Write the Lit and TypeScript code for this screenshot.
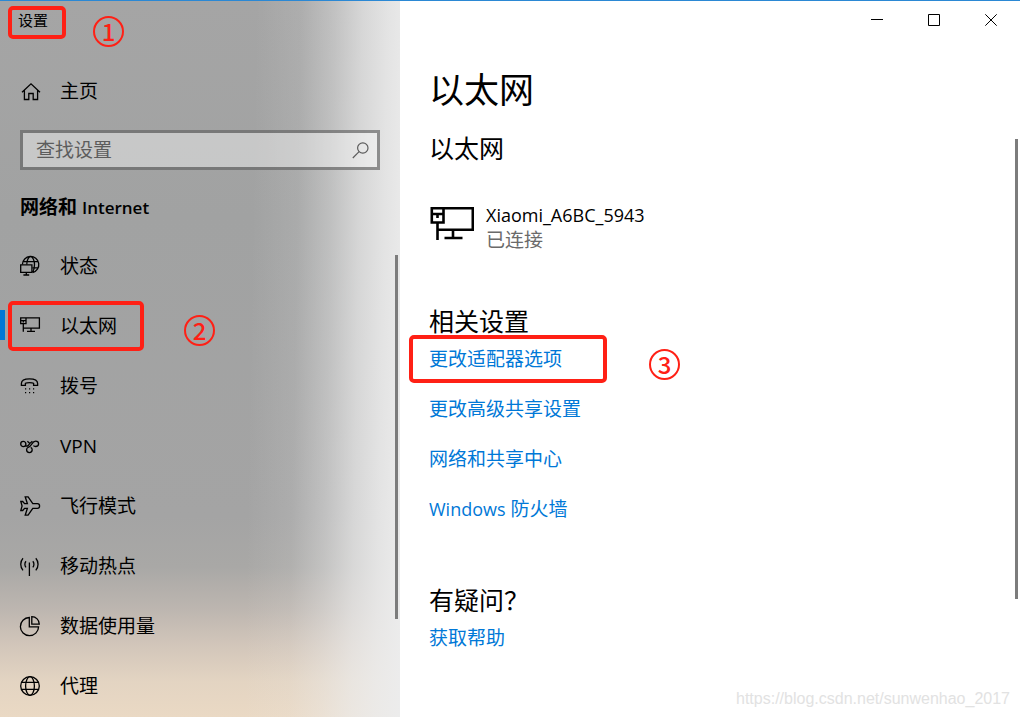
import { LitElement, html, svg, css } from "lit";
import { customElement, property, state } from "lit/decorators.js";

const icons: Record<string, unknown> = {
  status: svg`<path d="M2.4 8.4A8.2 8.2 0 1 1 12.6 16.6M6.8 8.5C6.8 4 8.6.7 10.6.7s3.9 3.4 3.9 8c0 3-.8 5.6-2 7.6M3.5 5.6h14.2M12.3 11.8h5.6"/><path d="M.7 8.8h11.2v7.6H.7zM6.3 16.4v2.6M3.4 19h5.8"/>`,
  ethernet: svg`<path d="M6 1.8h13.4v10.4H3.3M.7 1.8H6v5.9H.7zM.7 4.6H6M3.3 4.6v2M3.3 7.7v8M11 12.2v3M7 15.3h8"/>`,
  dialup: svg`<path d="M1.4 9.4V7.6C1.4 4.4 5 2.9 9.5 2.9s8.1 1.5 8.1 4.7v1.8h-4V7.3c-1.8-1-6.4-1-8.2 0v2.1z"/><path d="M5 12.9h1.2M9 12.9h1.2M13 12.9h1.2M5 16.7h1.2M9 16.7h1.2M13 16.7h1.2"/>`,
  vpn: svg`<circle cx="3.3" cy="8" r="2.6"/><path d="M5.4 9.6c2.2 1.6 3.2-.6 4.7-2.6M7.4 5.3l2.4 2.2 2.6-2.2M13.4 9.6c.6.6 1.4.9 2.2.9 1.7 0 3-1.2 3-2.7s-1.3-2.6-3-2.6c-3.6 0-4.2 5.4-7.4 6.1-1 .6-1.6 1.5-1.6 2.5 0 1.6 1.3 2.8 2.8 2.8s2.8-1.2 2.8-2.8c0-1.1-.6-2-1.5-2.4"/>`,
  airplane: svg`<path d="M5.2.8h2.9l4.7 6.9h4.6c1.4 0 2.2 1.1 2.2 2.3s-.8 2.3-2.2 2.3h-4.6l-4.7 6.9H5.2l2.2-6.9H4.6l-1.9 2.2H.8L2.1 10 .8 5.5h1.9l1.9 2.2h2.8z"/>`,
  hotspot: svg`<path d="M9.4 6.4V20M6 5.2c-1.5 1.6-1.5 4.6 0 6.2M12.8 5.2c1.5 1.6 1.5 4.6 0 6.2M3 2.2c-3 3.3-3 8.9 0 12.2M15.8 2.2c3 3.3 3 8.9 0 12.2"/>`,
  usage: svg`<path d="M9.3 1.5A9.1 9.1 0 1 0 18.6 10.8H9.3z"/><path d="M11.8.7c4.2 0 7.5 3.3 7.5 7.5h-7.5z"/>`,
  proxy: svg`<circle cx="10" cy="10" r="9.3"/><ellipse cx="10" cy="10" rx="4.4" ry="9.3"/><path d="M1.5 6.4h17M1.5 13.4h17"/>`,
  home: svg`<path d="M2 11.2l9-8.4 9 8.4M4.4 9.3v9.2h4.4v-6h4.4v6h4.4V9.3"/>`,
};

interface NavEntry {
  icon: string;
  label: string;
  step?: number;
}

const navEntries: NavEntry[] = [
  { icon: "status", label: "状态" },
  { icon: "ethernet", label: "以太网", step: 2 },
  { icon: "dialup", label: "拨号" },
  { icon: "vpn", label: "VPN" },
  { icon: "airplane", label: "飞行模式" },
  { icon: "hotspot", label: "移动热点" },
  { icon: "usage", label: "数据使用量" },
  { icon: "proxy", label: "代理" },
];

/** Red outline and numbered circle that mark one step of the guide. */
@customElement("step-mark")
class StepMark extends LitElement {
  @property({ type: Number }) step = 1;

  static styles = css`
    :host {
      position: absolute;
      inset: var(--mark-inset, 0);
      box-sizing: border-box;
      border: 4px solid #ff2015;
      border-radius: 5px;
      pointer-events: none;
    }
    .number {
      position: absolute;
      left: calc(100% + var(--mark-gap, 46px));
      top: var(--mark-top, 10px);
      box-sizing: border-box;
      width: 31px;
      height: 31px;
      border: 2px solid #ff2015;
      border-radius: 50%;
      color: #ff2015;
      font: 500 24px/26px "Noto Sans CJK SC", sans-serif;
      text-align: center;
    }
  `;

  render() {
    return html`<span class="number">${this.step}</span>`;
  }
}

@customElement("settings-sidebar")
class SettingsSidebar extends LitElement {
  @state() private current = "以太网";

  static styles = css`
    :host {
      position: relative;
      display: block;
      box-sizing: border-box;
      background:
        linear-gradient(91deg, rgba(236, 236, 236, 0) 62%, rgba(236, 236, 236, 0.12) 73%, rgba(236, 236, 236, 0.4) 81%, rgba(236, 236, 236, 0.7) 88%, rgba(236, 236, 236, 0.88) 94%, #ececec 100%),
        linear-gradient(#a5a5a5 0%, #a1a2a2 30%, #a4a4a4 72%, #a9a8a6 79%, #bdb6b0 85%, #d2c6ba 90%, #e3d4c2 95%, #ead9c4 100%);
    }
    .titlebar {
      display: flex;
      padding: 5px 8px 0;
    }
    .title {
      position: relative;
      margin: 0;
      padding: 4px 18px 8px 10px;
      font-size: 15px;
      line-height: 21px;
      font-weight: 400;
      --mark-gap: 31px;
      --mark-top: 6px;
    }
    a {
      display: flex;
      align-items: center;
      gap: 20px;
      color: inherit;
      text-decoration: none;
    }
    .home {
      height: 40px;
      margin-top: 32px;
      padding-left: 20px;
    }
    .icon {
      flex: none;
      width: 20px;
      height: 20px;
      fill: none;
      stroke: #000;
      stroke-width: 1.3;
      overflow: visible;
    }
    .search {
      display: flex;
      align-items: center;
      box-sizing: border-box;
      height: 40px;
      margin: 19px 20px 0;
      padding: 0 8px 0 13px;
      border: 3px solid rgba(0, 0, 0, 0.4);
      background: rgba(255, 255, 255, 0.4);
    }
    .field {
      flex: 1;
      min-width: 0;
      padding: 0;
      border: 0;
      outline: 0;
      background: none;
      color: #000;
      font: inherit;
    }
    .field::placeholder {
      color: #5c5c5c;
      opacity: 1;
    }
    .go {
      display: flex;
      padding: 0;
      border: 0;
      background: none;
    }
    .lens {
      width: 17px;
      height: 17px;
      fill: none;
      stroke: #5c5c5c;
      stroke-width: 1.2;
    }
    .group {
      margin: 24px 20px 15px;
      font-size: 19px;
      line-height: 27px;
      font-weight: 700;
    }
    .latin {
      font-size: 17px;
      font-weight: 600;
    }
    ul {
      margin: 0;
      padding: 0;
      list-style: none;
    }
    .item {
      position: relative;
      height: 60px;
      padding-left: 20px;
    }
    .item.current::before {
      content: "";
      position: absolute;
      left: 0;
      top: 14px;
      width: 5px;
      height: 30px;
      background: #0078d7;
    }
    .item step-mark {
      --mark-inset: 5px auto 5px 8px;
      --mark-gap: 44px;
      width: 136px;
    }
    .thumb {
      position: absolute;
      right: 2px;
      top: 254px;
      width: 3px;
      height: 364px;
      background: #7c7c7c;
    }
  `;

  render() {
    return html`
      <div class="titlebar">
        <h1 class="title">设置<step-mark .step=${1}></step-mark></h1>
      </div>
      <a class="home" href="#home">
        <svg class="icon" viewBox="0 0 20 20" aria-hidden="true">${icons.home}</svg>主页
      </a>
      <form class="search" role="search" @submit=${(e: Event) => e.preventDefault()}>
        <input class="field" type="text" placeholder="查找设置" aria-label="查找设置" />
        <button class="go" aria-label="查找">
          <svg class="lens" viewBox="0 0 17 17" aria-hidden="true">
            <circle cx="10.8" cy="6" r="5.2" /><path d="M7.1 9.7L.8 16" />
          </svg>
        </button>
      </form>
      <h2 class="group">网络和 <span class="latin">Internet</span></h2>
      <nav>
        <ul>
          ${navEntries.map(
            (entry) => html`<li>
              <a
                class="item ${entry.label === this.current ? "current" : ""}"
                href="#${entry.icon}"
                @click=${() => (this.current = entry.label)}
              >
                <svg class="icon" viewBox="0 0 20 20" aria-hidden="true">${icons[entry.icon]}</svg>
                <span>${entry.label}</span>
                ${entry.step ? html`<step-mark .step=${entry.step}></step-mark>` : ""}
              </a>
            </li>`
          )}
        </ul>
      </nav>
      <div class="thumb"></div>
    `;
  }
}

@customElement("ethernet-page")
class EthernetPage extends LitElement {
  static styles = css`
    :host {
      position: relative;
      display: block;
      background: #fff;
    }
    .controls {
      display: flex;
      justify-content: flex-end;
      padding-right: 1px;
    }
    .control {
      display: grid;
      place-items: center;
      width: 57px;
      height: 38px;
      padding: 0;
      border: 0;
      background: none;
    }
    .glyph {
      width: 12px;
      height: 12px;
      fill: none;
      stroke: #000;
      stroke-width: 1;
    }
    .content {
      padding: 25px 29px 0;
    }
    h1,
    h2 {
      margin: 0;
      font-weight: 400;
    }
    h1 {
      margin-bottom: 14px;
      font-size: 35px;
      line-height: 52px;
    }
    h2 {
      font-size: 25px;
      line-height: 36px;
    }
    .network {
      display: flex;
      gap: 12px;
      margin: 37px 0 50px;
    }
    .adapter {
      width: 45px;
      height: 35px;
      margin-top: 3px;
      fill: none;
      stroke: #000;
      stroke-width: 2.6;
    }
    .network p {
      margin: 0;
      line-height: 25px;
    }
    .name {
      font-size: 18px;
    }
    .state {
      color: #6a6a6a;
    }
    ul {
      margin: 0 0 48px;
      padding: 0;
      list-style: none;
    }
    .related {
      position: relative;
      display: flex;
      align-items: center;
      height: 50px;
    }
    .related:first-child {
      margin-top: -5px;
    }
    .related step-mark {
      --mark-inset: 1px auto 1px -20px;
      width: 198px;
    }
    .latin {
      font-size: 18px;
    }
    a {
      color: #0078d7;
      text-decoration: none;
    }
    .help {
      display: block;
      margin-top: 6px;
      line-height: 28px;
    }
    .thumb {
      position: absolute;
      right: 2px;
      top: 138px;
      width: 3px;
      height: 460px;
      background: #7c7c7c;
    }
    .watermark {
      position: absolute;
      right: 10px;
      bottom: 8px;
      color: #e2e2e2;
      font: 16px/20px "Liberation Sans", sans-serif;
    }
  `;

  render() {
    const related = [
      "更改适配器选项",
      "更改高级共享设置",
      "网络和共享中心",
      html`<span class="latin">Windows</span> 防火墙`,
    ];
    return html`
      <div class="controls">
        <button class="control" aria-label="最小化">
          <svg class="glyph" viewBox="0 0 12 12"><path d="M0 5.5h12" /></svg>
        </button>
        <button class="control" aria-label="最大化">
          <svg class="glyph" viewBox="0 0 12 12"><path d="M.5.5h11v11H.5z" /></svg>
        </button>
        <button class="control" aria-label="关闭">
          <svg class="glyph" viewBox="0 0 12 12"><path d="M.3.3l11.4 11.4M11.7.3L.3 11.7" /></svg>
        </button>
      </div>
      <main class="content">
        <h1>以太网</h1>
        <h2>以太网</h2>
        <div class="network">
          <svg class="adapter" viewBox="0 0 45 35" aria-hidden="true">
            <path d="M14.5 2.3h29.3v21.4H8M2.8 2.3h11.7v14.2H2.8zM2.8 8h11.7M8.5 8v4M8.5 16.5V34M24 23.7v8M15.5 32h18" />
          </svg>
          <div>
            <p class="name">Xiaomi_A6BC_5943</p>
            <p class="state">已连接</p>
          </div>
        </div>
        <h2>相关设置</h2>
        <ul>
          ${related.map(
            (label, i) => html`<li class="related">
              <a href="#related-${i}">${label}</a>
              ${i === 0 ? html`<step-mark .step=${3}></step-mark>` : ""}
            </li>`
          )}
        </ul>
        <h2>有疑问？</h2>
        <a class="help" href="#help">获取帮助</a>
      </main>
      <div class="thumb"></div>
      <span class="watermark">https://blog.csdn.net/sunwenhao_2017</span>
    `;
  }
}

@customElement("app-root")
class AppRoot extends LitElement {
  static styles = css`
    :host {
      display: grid;
      grid-template-columns: 400px minmax(0, 1fr);
      box-sizing: border-box;
      min-height: 100vh;
      border-top: 1px solid #2b88d4;
      color: #000;
      font: 19px/28px "Open Sans", "Noto Sans CJK SC", sans-serif;
    }
  `;

  render() {
    return html`<settings-sidebar></settings-sidebar><ethernet-page></ethernet-page>`;
  }
}
